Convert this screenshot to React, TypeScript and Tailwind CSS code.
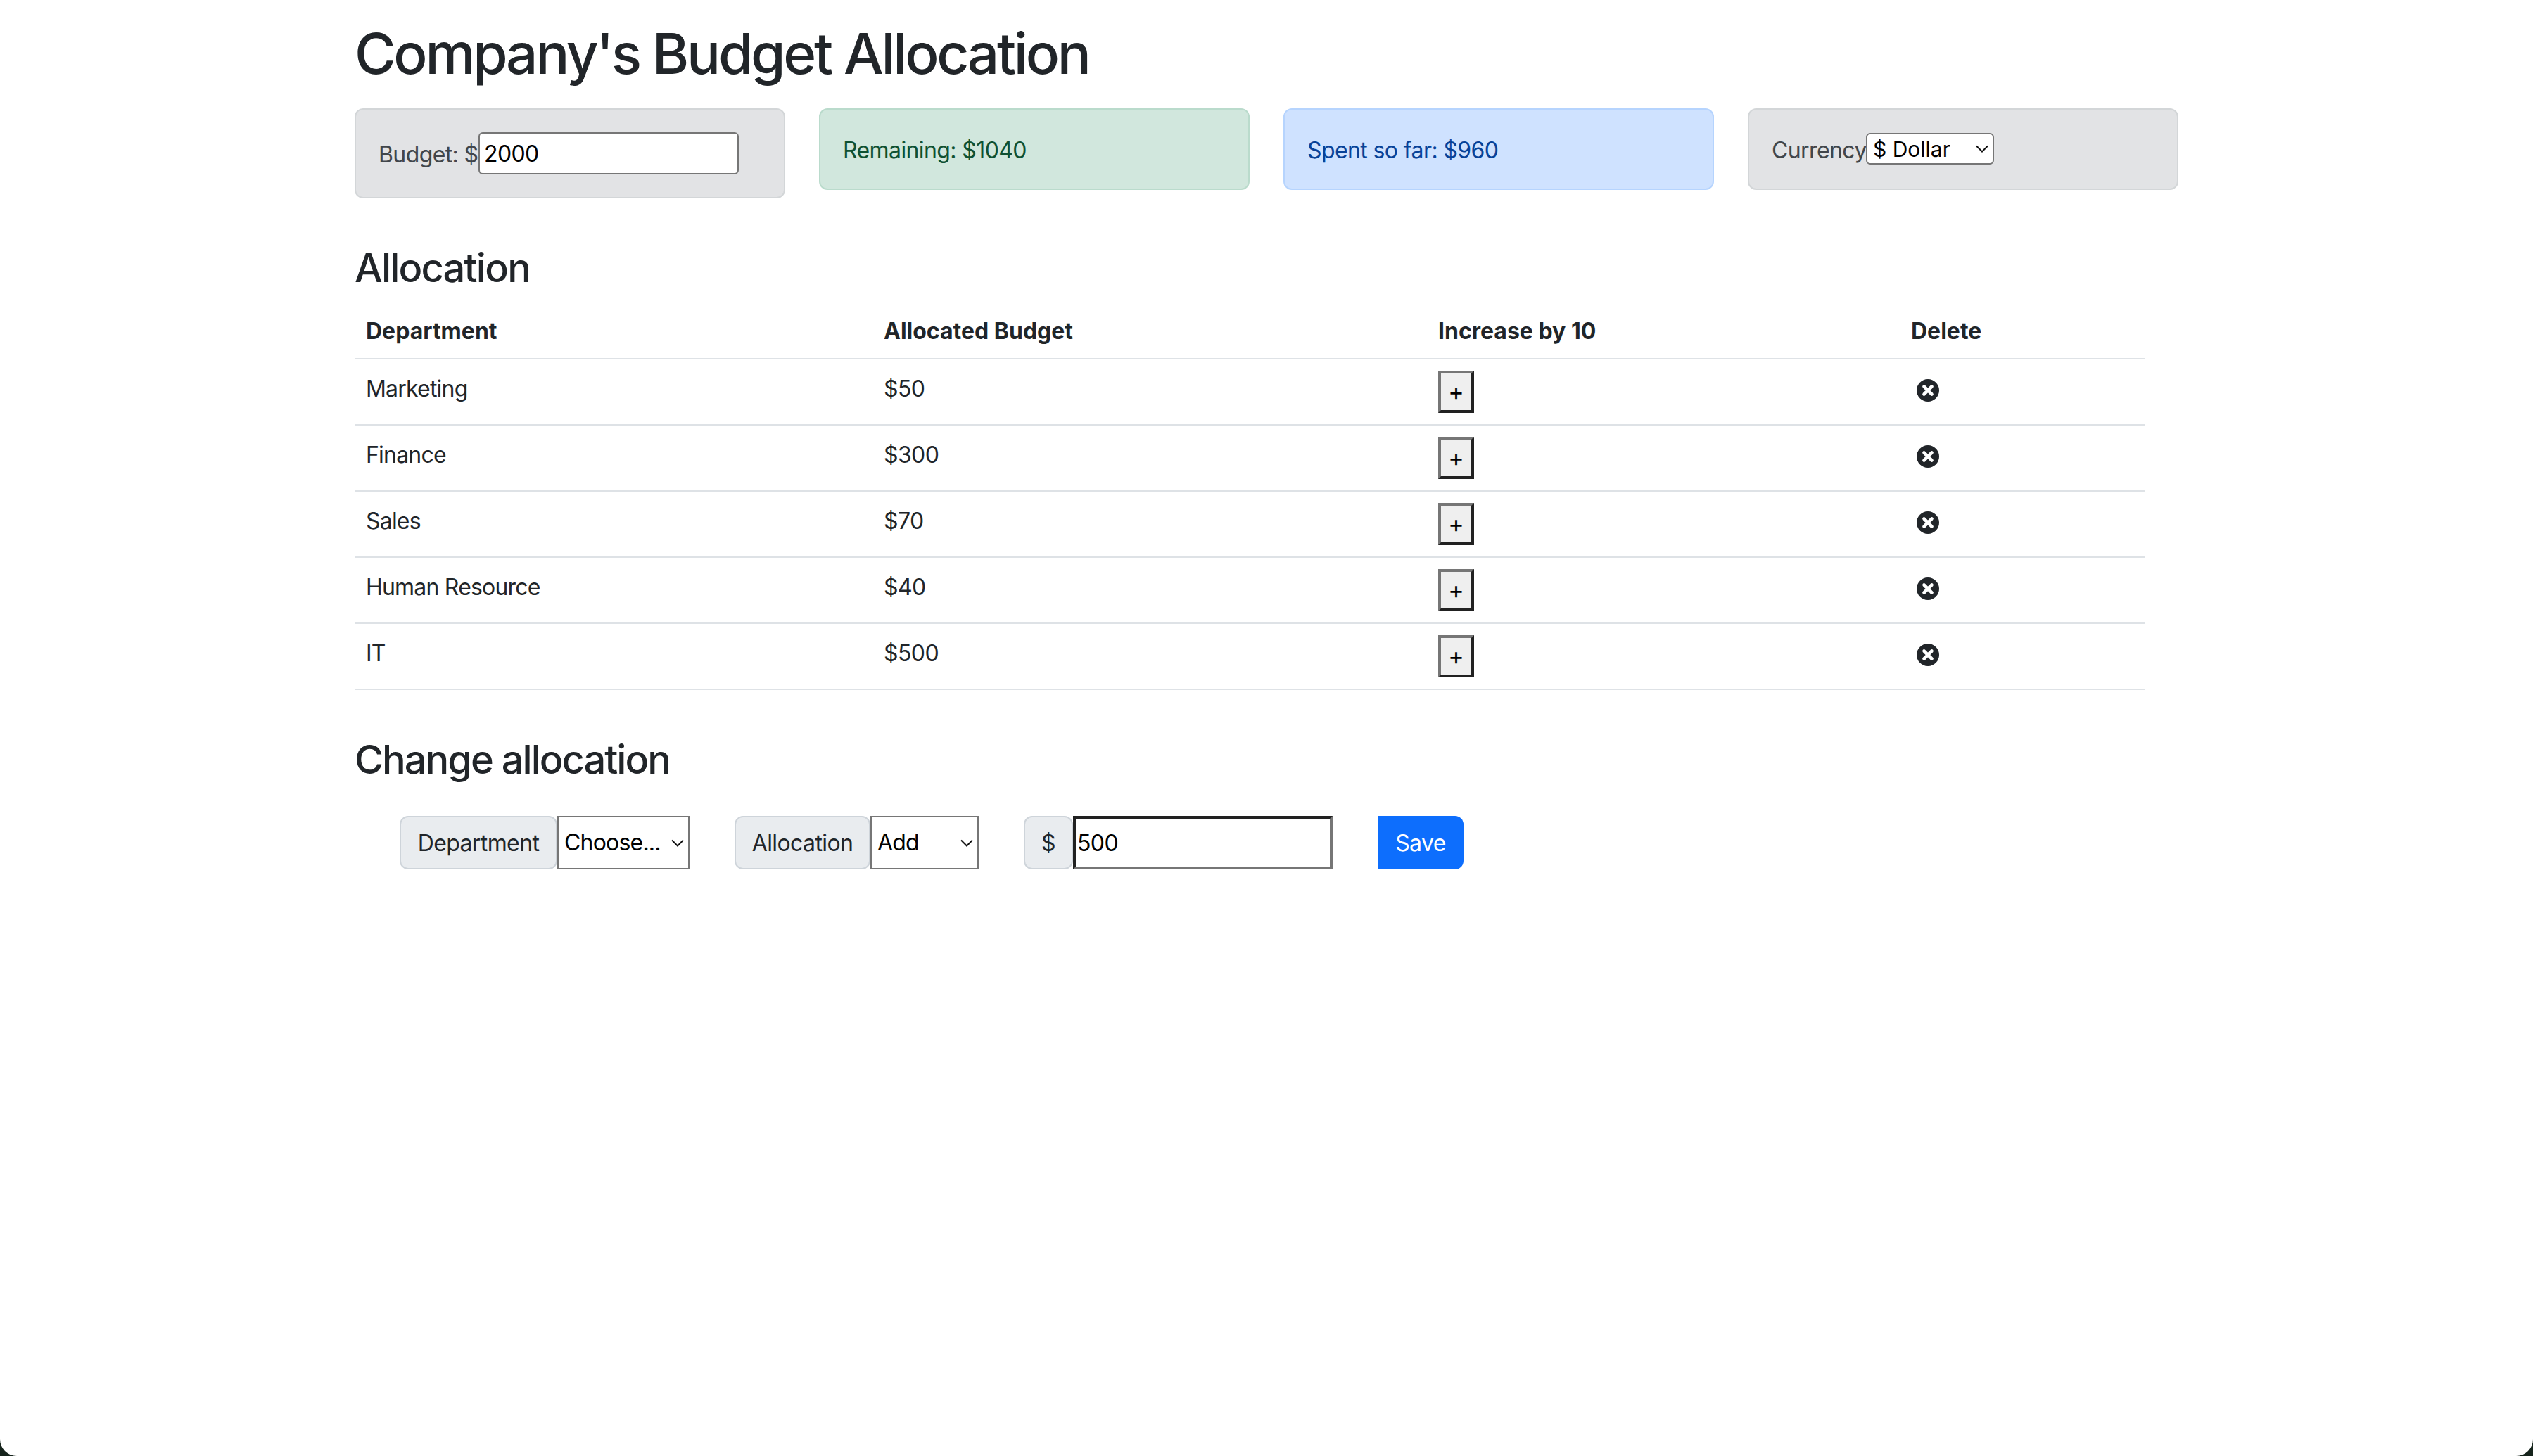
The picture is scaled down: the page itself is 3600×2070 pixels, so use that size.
const departments = [
  { name: 'Marketing', budget: 50 },
  { name: 'Finance', budget: 300 },
  { name: 'Sales', budget: 70 },
  { name: 'Human Resource', budget: 40 },
  { name: 'IT', budget: 500 },
];

function Chevron({ className }: { className: string }) {
  return (
    <svg className={className} width="18" height="11" viewBox="0 0 18 11" fill="none" stroke="#111" strokeWidth="2">
      <path d="M1 1.5 L9 9.5 L17 1.5" />
    </svg>
  );
}

function DeleteIcon() {
  return (
    <svg width="32" height="32" viewBox="0 0 32 32" className="block">
      <circle cx="16" cy="16" r="16" fill="#212529" />
      <path d="M10.5 10.5 L21.5 21.5 M21.5 10.5 L10.5 21.5" stroke="#fff" strokeWidth="4.6" strokeLinecap="round" />
    </svg>
  );
}

export default function App() {
  return (
    <div className="h-[2070px] overflow-hidden bg-[#16241c] font-['Inter',sans-serif] text-[32px] leading-[48px] tracking-[-0.6px] text-[#212529]">
      <div className="h-full rounded-b-[24px] bg-white">
        <div className="mx-auto w-[2640px] px-6 pt-[28px]">
          <h1 className="text-[80px] font-medium leading-[96px] tracking-[-3.3px]">Company's Budget Allocation</h1>

          <div className="mt-[30px] grid w-[2592px] grid-cols-4 items-start gap-x-12">
            <div className="flex items-center rounded-xl border-2 border-[#d3d6d8] bg-[#e2e3e5] p-8 text-[#41464b]">
              <span className="mt-[3px] w-[142px] whitespace-nowrap">Budget: $</span>
              <input
                readOnly
                value="2000"
                className="h-[60px] w-[370px] rounded-md border-2 border-[#767676] bg-white px-[6px] text-[32px] text-black"
              />
            </div>
            <div className="rounded-xl border-2 border-[#badbcc] bg-[#d1e7dd] px-8 pb-[30px] pt-[34px] text-[#0f5132]">Remaining: $1040</div>
            <div className="rounded-xl border-2 border-[#b6d4fe] bg-[#cfe2ff] px-8 pb-[30px] pt-[34px] text-[#084298]">Spent so far: $960</div>
            <div className="flex h-[116px] items-center rounded-xl border-2 border-[#d3d6d8] bg-[#e2e3e5] p-8 text-[#41464b]">
              <span className="mt-[3px] w-[134px] whitespace-nowrap">Currency</span>
              <div className="relative -mt-[1px]">
                <select className="block h-[45px] w-[182px] appearance-none rounded-md border-2 border-[#767676] bg-white pl-[8px] text-[30px] leading-none tracking-normal text-black">
                  <option>$ Dollar</option>
                </select>
                <Chevron className="absolute right-[8px] top-[17px]" />
              </div>
            </div>
          </div>

          <h3 className="mt-[66px] text-[56px] font-medium leading-[67px] tracking-[-1.8px]">Allocation</h3>

          <table className="mt-[14px] w-[2544px] table-fixed border-collapse text-left">
            <thead>
              <tr className="border-b-2 border-[#dee2e6]">
                <th className="w-[736px] px-4 pb-[14px] pt-[18px] font-bold tracking-normal">Department</th>
                <th className="w-[788px] px-4 pb-[14px] pt-[18px] font-bold tracking-normal">Allocated Budget</th>
                <th className="w-[672px] px-4 pb-[14px] pt-[18px] font-bold tracking-normal">Increase by 10</th>
                <th className="px-4 pb-[14px] pt-[18px] font-bold tracking-normal">Delete</th>
              </tr>
            </thead>
            <tbody>
              {departments.map((dept) => (
                <tr key={dept.name} className="border-b-2 border-[#dee2e6]">
                  <td className="px-4 pb-[14px] pt-[18px] align-top tracking-[-0.8px]">{dept.name}</td>
                  <td className="px-4 pb-[14px] pt-[18px] align-top tracking-[-0.6px]">${dept.budget}</td>
                  <td className="p-4 align-top">
                    <button
                      type="button"
                      className="block h-[60px] w-[51px] border-4 border-b-[#212121] border-l-[#767676] border-r-[#212121] border-t-[#767676] bg-[#efefef] text-center text-[34px] leading-[50px] tracking-normal text-black"
                    >
                      +
                    </button>
                  </td>
                  <td className="px-6 pb-4 pt-7 align-top">
                    <DeleteIcon />
                  </td>
                </tr>
              ))}
            </tbody>
          </table>

          <h3 className="mt-[66px] text-[56px] font-medium leading-[67px] tracking-[-2px]">Change allocation</h3>

          <div className="ml-16 mt-[46px] flex h-[76px] items-stretch gap-16">
            <div className="flex">
              <span className="flex w-[224px] items-center justify-center rounded-xl border-2 border-[#ced4da] bg-[#e9ecef] pt-[2px]">Department</span>
              <div className="relative">
                <select className="block h-full w-[188px] appearance-none border-2 border-[#767676] bg-white pl-2 text-[32px] tracking-[-0.8px] text-black">
                  <option>Choose...</option>
                </select>
                <Chevron className="absolute right-[8px] top-[33px]" />
              </div>
            </div>
            <div className="flex">
              <span className="flex w-[193px] items-center justify-center rounded-xl border-2 border-[#ced4da] bg-[#e9ecef] pt-[2px]">Allocation</span>
              <div className="relative">
                <select className="block h-full w-[154px] appearance-none border-2 border-[#767676] bg-white pl-2 text-[32px] tracking-[-0.8px] text-black">
                  <option>Add</option>
                </select>
                <Chevron className="absolute right-[8px] top-[33px]" />
              </div>
            </div>
            <div className="flex">
              <span className="flex w-[70px] items-center justify-center rounded-xl border-2 border-[#ced4da] bg-[#e9ecef] pt-[2px]">$</span>
              <input
                readOnly
                value="500"
                className="w-[369px] border-4 border-b-[#767676] border-l-[#212121] border-r-[#767676] border-t-[#212121] bg-white px-[2px] pt-[2px] text-[32px] tracking-[-0.6px] text-black"
              />
            </div>
            <button type="button" className="w-[122px] rounded-r-xl bg-[#0d6efd] pt-[2px] text-white">Save</button>
          </div>
        </div>
      </div>
    </div>
  );
}
